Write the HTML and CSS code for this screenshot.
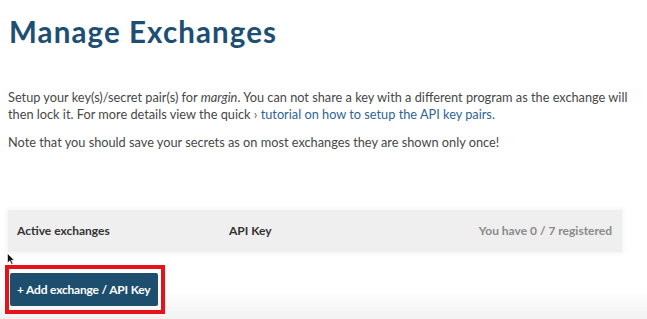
FILE: index.html
```html
<!DOCTYPE html>
<html lang="en">
<head>
<meta charset="utf-8">
<title>Manage Exchanges</title>
<link rel="stylesheet" href="styles.css">
</head>
<body>
<main class="page">
  <h1 class="title">Manage Exchanges</h1>
  <p class="text">Setup your key(s)/secret pair(s) for <em>margin</em>. You can not share a key with a different program as the exchange will then lock it. For more details view the quick <span class="chev">›</span> <a class="link" href="#">tutorial on how to setup the API key pairs.</a></p>
  <p class="text">Note that you should save your secrets as on most exchanges they are shown only once!</p>

  <div class="table-head">
    <span class="col col-name">Active exchanges</span>
    <span class="col col-key">API Key</span>
    <span class="col col-count">You have 0 / 7 registered</span>
  </div>

  <div class="action">
    <svg class="cursor" width="8" height="12" viewBox="0 0 8 12"><path d="M0.5 0.5 L0.5 10 L2.8 7.8 L4.6 11.5 L6 10.8 L4.3 7.2 L7.4 7.2 Z" fill="#111" stroke="#fff" stroke-width="0.6"/></svg>
    <div class="highlight">
      <button class="btn" type="button">+ Add exchange / API Key</button>
    </div>
  </div>
</main>
</body>
</html>
```

FILE: styles.css
```css
html, body {
  margin: 0;
  padding: 0;
  background: #ffffff;
}
body {
  font-family: Lato, "Open Sans", sans-serif;
  color: #444;
  min-height: 319px;
  background: linear-gradient(to bottom, #ffffff 0, #ffffff 292px, #f1f1f1 319px);
}
.page {
  width: 614px;
  padding: 14px 0 0 8px;
}
.title {
  margin: 0 0 0 1px;
  font-size: 29.5px;
  line-height: 1.2;
  font-weight: 700;
  color: #1d4e74;
  letter-spacing: 1.1px;
}
.text {
  width: 628px;
  margin: 0 0 12px 0;
  font-size: 12.75px;
  line-height: 16.5px;
  color: #474747;
}
.title + .text {
  margin-top: 40px;
}
.text em {
  font-style: italic;
}
.chev {
  color: #666;
}
.link {
  color: #2f6592;
  text-decoration: none;
}
.table-head {
  margin-top: 59px;
  height: 42px;
  background: #efefef;
  display: grid;
  grid-template-columns: 212px 1fr auto;
  align-items: center;
  padding: 0 10px 0 9px;
  font-size: 12px;
  font-weight: 700;
  box-shadow: 0 0 4px 2px #f6f6f6;
}
.col-name, .col-key {
  color: #333;
}
.col-count {
  color: #8a8a8a;
}
.action {
  position: relative;
  padding-top: 13px;
  margin-left: -3px;
}
.cursor {
  position: absolute;
  left: 2px;
  top: 1px;
}
.highlight {
  display: inline-block;
  border: 4px solid #e5121b;
  padding: 4px 3px 4px 1px;
}
.btn {
  display: block;
  height: 33px;
  padding: 0 8px 0 7px;
  border: 0;
  border-radius: 2px;
  background: #1e4e6e;
  color: #ffffff;
  font-family: Lato, "Open Sans", sans-serif;
  font-size: 12px;
  font-weight: 700;
  letter-spacing: -0.2px;
}
```
